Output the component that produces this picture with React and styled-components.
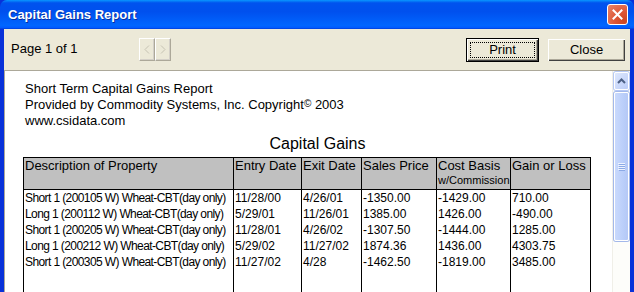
import React from 'react'
import styled, { createGlobalStyle } from 'styled-components'

const GlobalStyle = createGlobalStyle`
  html, body {
    margin: 0;
    padding: 0;
    width: 634px;
    height: 292px;
    overflow: hidden;
    background: #ece9d8;
  }
`

const SANS = `"Liberation Sans", Arial, sans-serif`

const rows = [
  ['Short 1 (200105 W) Wheat-CBT(day only)', '11/28/00', '4/26/01', '-1350.00', '-1429.00', '710.00'],
  ['Long 1 (200112 W) Wheat-CBT(day only)', '5/29/01', '11/26/01', '1385.00', '1426.00', '-490.00'],
  ['Short 1 (200205 W) Wheat-CBT(day only)', '11/28/01', '4/26/02', '-1307.50', '-1444.00', '1285.00'],
  ['Long 1 (200212 W) Wheat-CBT(day only)', '5/29/02', '11/27/02', '1874.36', '1436.00', '4303.75'],
  ['Short 1 (200305 W) Wheat-CBT(day only)', '11/27/02', '4/28', '-1462.50', '-1819.00', '3485.00'],
]

const columns = [210, 68, 60, 75, 74, 80]

const Window = styled.div`
  width: 634px;
  height: 292px;
  display: flex;
  flex-direction: column;
  background: #0831d9;
  overflow: hidden;
`

const TitleBar = styled.div`
  height: 29px;
  flex: none;
  display: flex;
  align-items: center;
  justify-content: space-between;
  padding: 0 6px 0 8px;
  background: linear-gradient(
    to bottom,
    #0997ff 0%,
    #0053ee 10%,
    #0050ee 40%,
    #0066ff 88%,
    #005bff 95%,
    #003dd7 100%
  );
  border-radius: 7px 7px 0 0;
`

const Title = styled.div`
  color: #fff;
  font-family: ${SANS};
  font-weight: bold;
  font-size: 13px;
  text-shadow: 1px 1px 0 #0a2e9e;
`

const CloseBox = styled.div`
  width: 21px;
  height: 21px;
  box-sizing: border-box;
  border: 1px solid #fff;
  border-radius: 3px;
  background: radial-gradient(circle at 85% 85%, #cc4622 0%, #dd5535 40%, #e8866a 100%);
  display: flex;
  align-items: center;
  justify-content: center;
`

const Body = styled.div`
  flex: 1;
  display: flex;
  flex-direction: column;
  margin: 0 4px;
  background: #ece9d8;
  min-height: 0;
`

const Toolbar = styled.div`
  height: 41px;
  flex: none;
  display: flex;
  align-items: center;
  padding: 0 4px 0 7px;
  font-family: ${SANS};
  font-size: 13px;
  color: #000;
`

const PageLabel = styled.span`
  width: 128px;
  margin-top: -2px;
`

const NavGroup = styled.div`
  display: flex;
`

const NavButton = styled.div`
  width: 16px;
  height: 23px;
  box-sizing: border-box;
  background: #ece9d8;
  border-top: 1px solid #fff;
  border-left: 1px solid #fff;
  border-right: 1px solid #aca899;
  border-bottom: 1px solid #aca899;
  box-shadow: inset -1px -1px 0 #d4d0c8;
  display: flex;
  align-items: center;
  justify-content: center;
`

const Spacer = styled.div`
  flex: 1;
`

const Button = styled.div`
  width: ${p => p.$width}px;
  height: 24px;
  box-sizing: border-box;
  margin-left: ${p => p.$gap || 0}px;
  background: #ece9d8;
  border: 1px solid ${p => (p.$default ? '#000' : '#ece9d8')};
  box-shadow: inset 1px 1px 0 #fff, inset -1px -1px 0 #404040, inset -2px -2px 0 #aca899;
  display: flex;
  align-items: center;
  justify-content: center;
  position: relative;
  font-family: ${SANS};
  font-size: 13px;
`

const FocusRing = styled.div`
  position: absolute;
  inset: 3px;
  border: 1px dotted #000;
`

const Frame = styled.div`
  flex: 1;
  display: flex;
  min-height: 0;
  border-top: 1px solid #aca899;
  border-left: 1px solid #aca899;
  background: #fff;
`

const Page = styled.div`
  flex: 1;
  padding: 10px 0 0 18px;
  font-family: ${SANS};
  color: #000;
  overflow: hidden;
`

const Header = styled.div`
  font-size: 13px;
  line-height: 16px;
  padding-left: 2px;
`

const Copy = styled.sup`
  font-size: 10px;
  vertical-align: 2px;
  line-height: 0;
`

const Heading = styled.div`
  text-align: center;
  font-size: 16px;
  line-height: 20px;
  margin: 5px 0 3px;
`

const Table = styled.table`
  border-collapse: collapse;
  table-layout: fixed;
  width: 567px;
  border: 1px solid #000;
`

const HeadCell = styled.th`
  background: #c0c0c0;
  border: 1px solid #000;
  font-weight: normal;
  font-size: 13px;
  text-align: left;
  vertical-align: top;
  padding: 0 0 0 1px;
  height: 31px;
  line-height: 15px;
  white-space: nowrap;
  overflow: hidden;
`

const Sub = styled.div`
  font-size: 11px;
  line-height: 13px;
  margin-top: 1px;
`

const Cell = styled.td`
  border-left: 1px solid #000;
  border-right: 1px solid #000;
  font-size: 12px;
  line-height: 16px;
  height: 16px;
  padding: 0 0 0 1px;
  letter-spacing: ${p => (p.$tight ? '-0.6px' : '0')};
  white-space: nowrap;
  overflow: hidden;
`

const FillCell = styled(Cell)`
  height: 60px;
`

const Scrollbar = styled.div`
  width: 17px;
  flex: none;
  display: flex;
  flex-direction: column;
  background: #fdfdfa;
  padding-top: 1px;
  border-left: 1px solid #f0efe8;
`

const ScrollButton = styled.div`
  height: 16px;
  margin: 0 1px;
  border: 1px solid #fff;
  border-radius: 2px;
  background: linear-gradient(to bottom right, #dde7fd, #bbcdf8);
  box-shadow: 0 0 0 1px #b5c8f5;
  display: flex;
  align-items: center;
  justify-content: center;
`

const Thumb = styled.div`
  height: 147px;
  margin: 2px 1px 0;
  border: 1px solid #fff;
  border-radius: 2px;
  background: linear-gradient(to right, #c9d9fc, #bbcffa 60%, #b4c8f6);
  box-shadow: 0 0 0 1px #a3b8ea;
  display: flex;
  align-items: center;
  justify-content: center;
`

const Arrow = ({ dir, color }) => (
  <svg width="6" height="9" viewBox="0 0 6 9">
    <path
      d={dir === 'left' ? 'M5 0.5 L1 4.5 L5 8.5' : 'M1 0.5 L5 4.5 L1 8.5'}
      fill="none"
      stroke={color}
      strokeWidth="1"
    />
  </svg>
)

export default function App() {
  return (
    <>
      <GlobalStyle />
      <Window>
        <TitleBar>
          <Title>Capital Gains Report</Title>
          <CloseBox>
            <svg width="11" height="11" viewBox="0 0 11 11">
              <path d="M1.5 1.5 L9.5 9.5 M9.5 1.5 L1.5 9.5" stroke="#fff" strokeWidth="2" strokeLinecap="square" />
            </svg>
          </CloseBox>
        </TitleBar>
        <Body>
          <Toolbar>
            <PageLabel>Page 1 of 1</PageLabel>
            <NavGroup>
              <NavButton>
                <Arrow dir="left" color="#c5c2b2" />
              </NavButton>
              <NavButton>
                <Arrow dir="right" color="#c5c2b2" />
              </NavButton>
            </NavGroup>
            <Spacer />
            <Button $width={73} $default>
              <FocusRing />
              Print
            </Button>
            <Button $width={79} $gap={8}>Close</Button>
          </Toolbar>
          <Frame>
            <Page>
              <Header>
                <div>Short Term Capital Gains Report</div>
                <div>
                  Provided by Commodity Systems, Inc. Copyright<Copy>©</Copy> 2003
                </div>
                <div>www.csidata.com</div>
              </Header>
              <Heading>Capital Gains</Heading>
              <Table>
                <colgroup>
                  {columns.map((w, i) => (
                    <col key={i} style={{ width: w }} />
                  ))}
                </colgroup>
                <thead>
                  <tr>
                    <HeadCell>Description of Property</HeadCell>
                    <HeadCell>Entry Date</HeadCell>
                    <HeadCell>Exit Date</HeadCell>
                    <HeadCell>Sales Price</HeadCell>
                    <HeadCell>
                      Cost Basis
                      <Sub>w/Commission</Sub>
                    </HeadCell>
                    <HeadCell>Gain or Loss</HeadCell>
                  </tr>
                </thead>
                <tbody>
                  {rows.map((r, i) => (
                    <tr key={i}>
                      {r.map((c, j) => (
                        <Cell key={j} $tight={j === 0}>{c}</Cell>
                      ))}
                    </tr>
                  ))}
                  <tr>
                    {columns.map((_, j) => (
                      <FillCell key={j} />
                    ))}
                  </tr>
                </tbody>
              </Table>
            </Page>
            <Scrollbar>
              <ScrollButton>
                <svg width="9" height="6" viewBox="0 0 9 6">
                  <path d="M1 5 L4.5 1.5 L8 5" fill="none" stroke="#4d6185" strokeWidth="2" />
                </svg>
              </ScrollButton>
              <Thumb>
                <svg width="7" height="8" viewBox="0 0 7 8">
                  <path d="M0 0.5 H7 M0 2.5 H7 M0 4.5 H7 M0 6.5 H7" stroke="#eef3fe" strokeWidth="1" />
                  <path d="M1 1.5 H7 M1 3.5 H7 M1 5.5 H7 M1 7.5 H7" stroke="#8caae6" strokeWidth="1" />
                </svg>
              </Thumb>
            </Scrollbar>
          </Frame>
        </Body>
      </Window>
    </>
  )
}
